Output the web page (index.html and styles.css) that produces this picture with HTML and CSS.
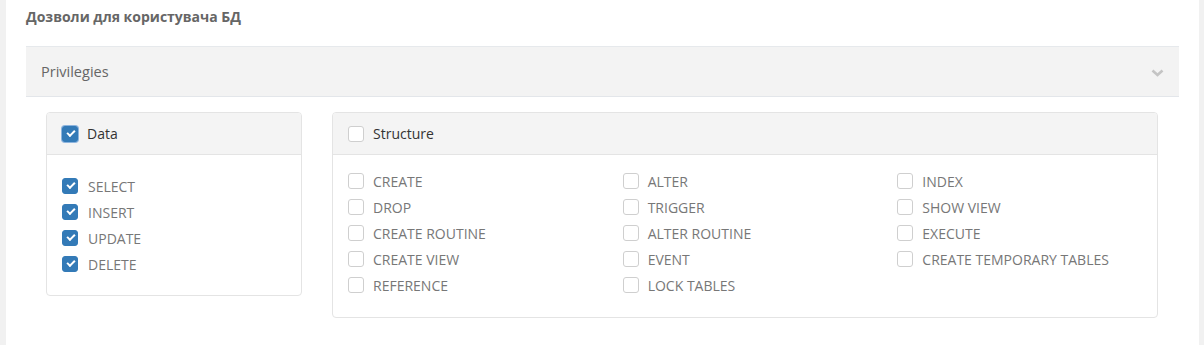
FILE: index.html
```html
<!DOCTYPE html>
<html>
<head>
  <meta charset="utf-8">
  <title>Дозволи для користувача БД</title>
  <link rel="stylesheet" href="styles.css">
</head>
<body>
  <div class="panel">
    <h4 class="panel-title">Дозволи для користувача БД</h4>

    <div class="collapse-head">
      <span>Privilegies</span>
      <svg class="chevron" width="13" height="8" viewBox="0 0 13 8">
        <path d="M1.5 1.5 L6.5 6 L11.5 1.5" fill="none" stroke="#c4c4c4" stroke-width="2.6"/>
      </svg>
    </div>

    <div class="collapse-body">
      <div class="card card-data">
        <div class="card-head">
          <label class="check"><span class="box checked focus"></span>Data</label>
        </div>
        <div class="card-body data-body">
          <label class="check item"><span class="box checked"></span>SELECT</label>
          <label class="check item"><span class="box checked"></span>INSERT</label>
          <label class="check item"><span class="box checked"></span>UPDATE</label>
          <label class="check item"><span class="box checked"></span>DELETE</label>
        </div>
      </div>

      <div class="card card-structure">
        <div class="card-head">
          <label class="check"><span class="box"></span>Structure</label>
        </div>
        <div class="card-body structure-body">
          <div class="grid">
            <div class="col">
              <label class="check item"><span class="box"></span>CREATE</label>
              <label class="check item"><span class="box"></span>DROP</label>
              <label class="check item"><span class="box"></span>CREATE ROUTINE</label>
              <label class="check item"><span class="box"></span>CREATE VIEW</label>
              <label class="check item"><span class="box"></span>REFERENCE</label>
            </div>
            <div class="col">
              <label class="check item"><span class="box"></span>ALTER</label>
              <label class="check item"><span class="box"></span>TRIGGER</label>
              <label class="check item"><span class="box"></span>ALTER ROUTINE</label>
              <label class="check item"><span class="box"></span>EVENT</label>
              <label class="check item"><span class="box"></span>LOCK TABLES</label>
            </div>
            <div class="col">
              <label class="check item"><span class="box"></span>INDEX</label>
              <label class="check item"><span class="box"></span>SHOW VIEW</label>
              <label class="check item"><span class="box"></span>EXECUTE</label>
              <label class="check item"><span class="box"></span>CREATE TEMPORARY TABLES</label>
            </div>
          </div>
        </div>
      </div>
    </div>
  </div>
</body>
</html>
```

FILE: styles.css
```css
* {
  margin: 0;
  padding: 0;
  box-sizing: border-box;
}

body {
  font-family: 'Open Sans', 'Noto Sans', sans-serif;
  background: #f1f1f1;
  color: #666;
  height: 345px;
  overflow: hidden;
}

.panel {
  background: #fff;
  margin: 0 5px 0 6px;
  padding: 7px 20px 30px 20px;
  height: 345px;
}

.panel-title {
  font-size: 14px;
  font-weight: 700;
  line-height: 20px;
  color: #666;
  margin-bottom: 19px;
}

/* Collapsible section header */
.collapse-head {
  display: flex;
  align-items: center;
  justify-content: space-between;
  height: 51px;
  padding: 0 15px;
  background: #f3f3f3;
  border-top: 1px solid #e6e9ec;
  border-bottom: 1px solid #e3e6ea;
  font-size: 14.5px;
  color: #666;
}

.chevron {
  margin-top: 2px;
}

.collapse-body {
  display: flex;
  gap: 30px;
  padding: 15px 20px 0 20px;
}

.card {
  border: 1px solid #e4e4e4;
  border-radius: 4px;
  background: #fff;
  overflow: hidden;
}

.card-data {
  width: 256px;
  align-self: flex-start;
}

.card-structure {
  width: 826px;
}

.card-head {
  height: 42px;
  background: #f4f4f4;
  border-bottom: 1px solid #e4e4e4;
  padding: 0 15px;
  display: flex;
  align-items: center;
}

.card-head .check {
  font-size: 14px;
  color: #333;
  gap: 9px;
}

.card-body {
  padding: 14px 15px 18px 15px;
}

.data-body {
  padding-top: 18px;
}

.structure-body {
  padding-top: 13px;
  padding-bottom: 19px;
}

.structure-body .check {
  gap: 9px;
}

.grid {
  display: flex;
  margin: 0 -15px;
}

.grid .col {
  width: 33.3333%;
  padding: 0 15px;
}

.check {
  display: flex;
  align-items: center;
  gap: 10px;
}

.item {
  height: 26px;
  font-size: 14px;
  color: #777;
}

.box {
  width: 16px;
  height: 16px;
  border: 1px solid #cfcfcf;
  border-radius: 3px;
  background: #fff;
  flex-shrink: 0;
  position: relative;
}

.box.checked {
  background: #337ab7;
  border-color: #337ab7;
}

.box.checked::after {
  content: '';
  position: absolute;
  left: 4px;
  top: 3px;
  width: 6px;
  height: 3px;
  border-left: 2px solid #fff;
  border-bottom: 2px solid #fff;
  transform: rotate(-45deg);
}

.box.focus {
  box-shadow: 0 0 0 1px #8db4de;
}
```
